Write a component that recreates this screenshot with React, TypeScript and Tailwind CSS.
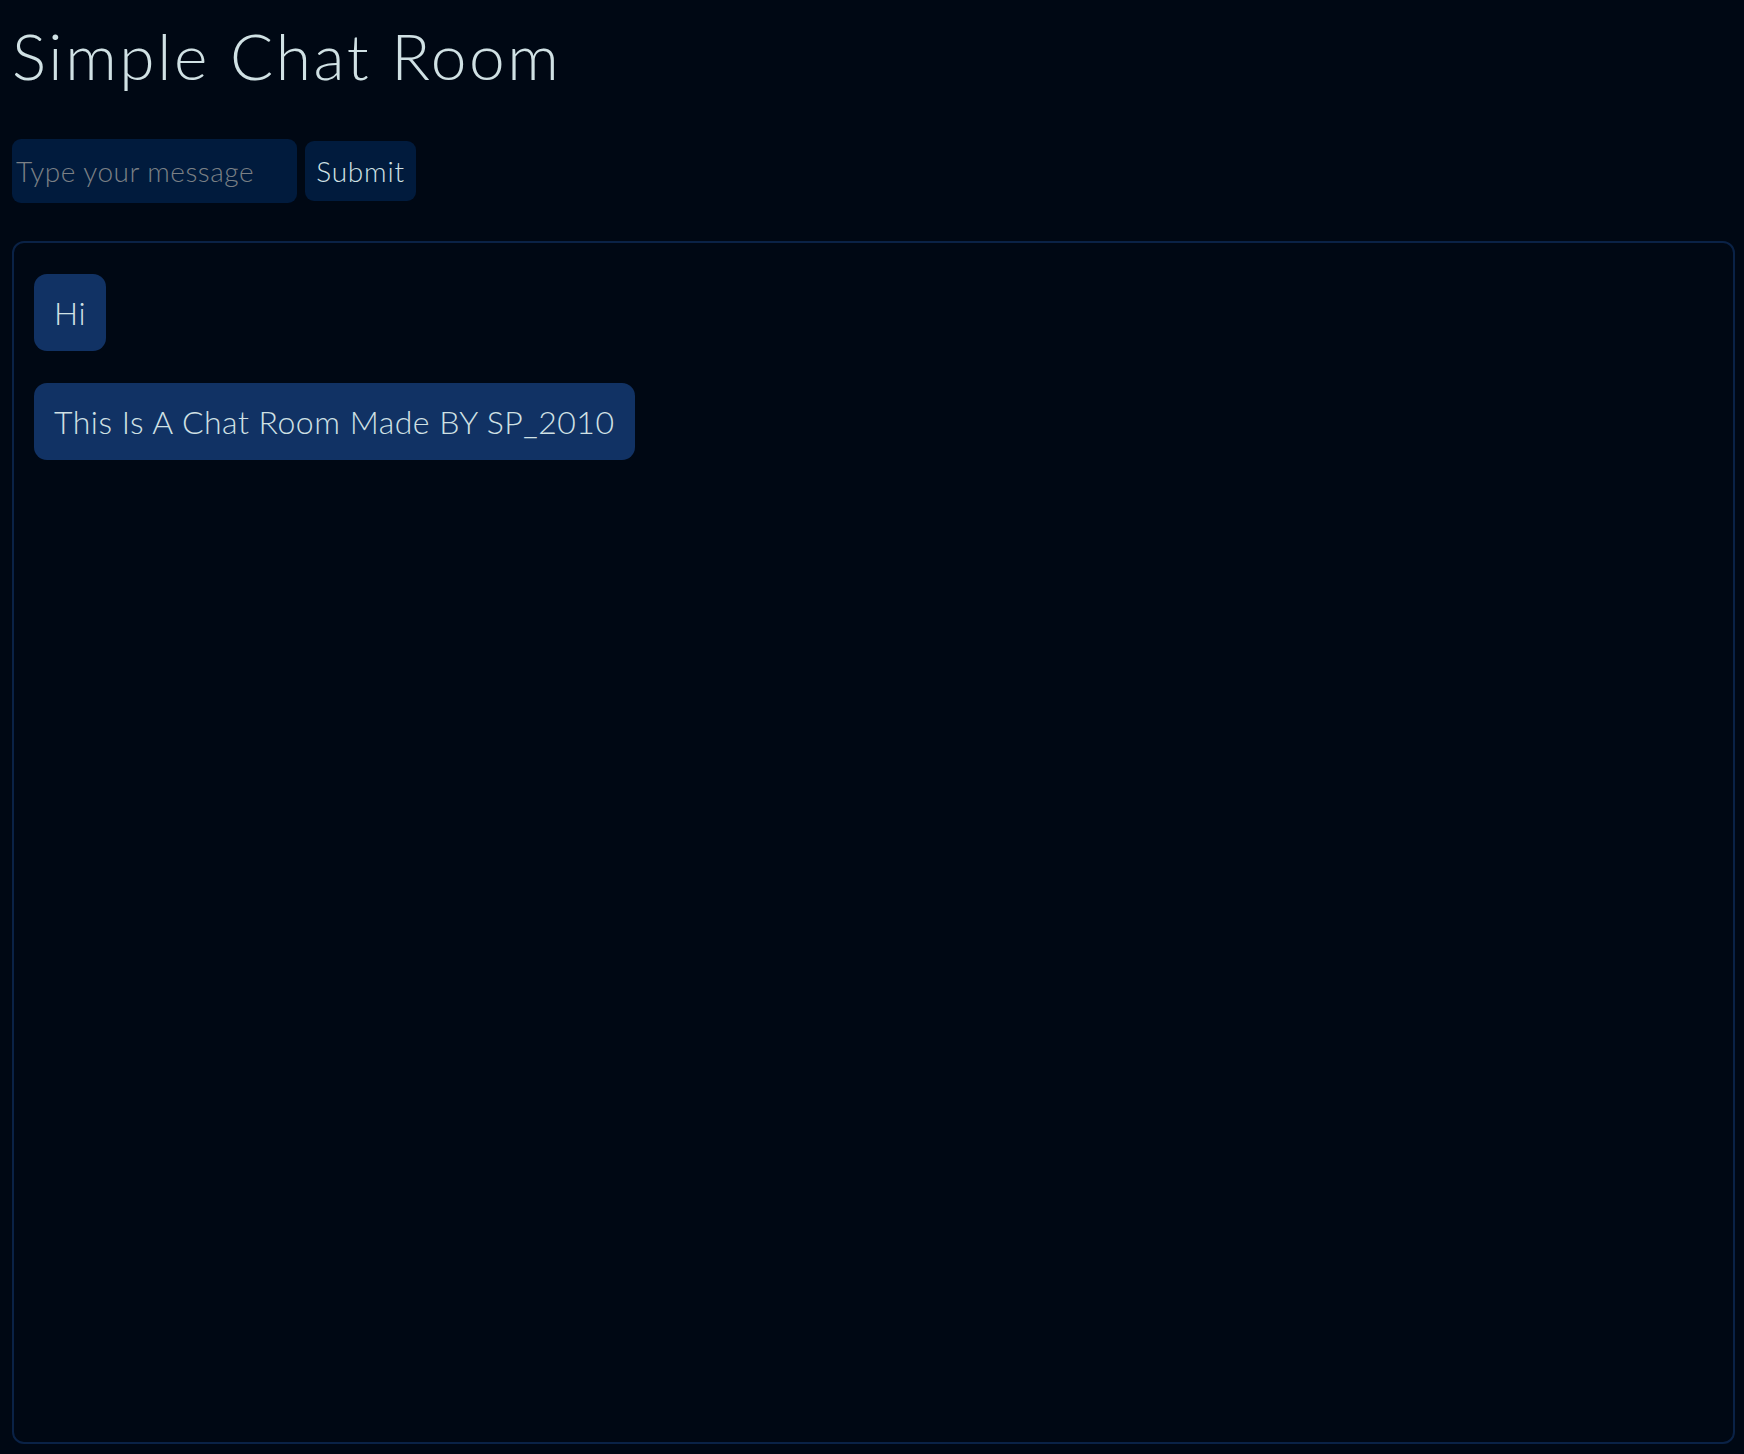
const MESSAGES = ["Hi", "This Is A Chat Room Made BY SP_2010"];

export default function App() {
    return (
        <div className="min-h-[1454px] bg-[#000814] pl-[12px] pr-[9px] text-[#d0e1e4] font-['Lato',sans-serif] font-light">
            <h1 className="pt-[18px] pb-[2px] text-[64px] leading-[76px] tracking-[2.6px]">Simple Chat Room</h1>

            <form className="mt-[43px] flex items-center gap-[8px]" onSubmit={(e) => e.preventDefault()}>
                <input
                    type="text"
                    placeholder="Type your message"
                    className="h-[64px] w-[285px] rounded-[9px] bg-[#011b3d] pl-[4px] text-[28px] font-light tracking-[0.5px] text-[#d0e1e4] outline-none placeholder:text-[#7b8085]"
                />
                <button type="submit" className="h-[60px] w-[111px] rounded-[9px] bg-[#011b3d] text-[28px] font-light tracking-[0.8px]">
                    Submit
                </button>
            </form>

            <div className="mt-[38px] flex h-[1203px] flex-col items-start gap-[32px] rounded-xl border-2 border-[#0a2246] px-[20px] py-[31px]">
                {MESSAGES.map((msg) => (
                    <div key={msg} className="flex h-[77px] items-center rounded-[13px] bg-[#113264] px-[20px] text-[32px] tracking-[0.5px]">
                        {msg}
                    </div>
                ))}
            </div>
        </div>
    );
}
